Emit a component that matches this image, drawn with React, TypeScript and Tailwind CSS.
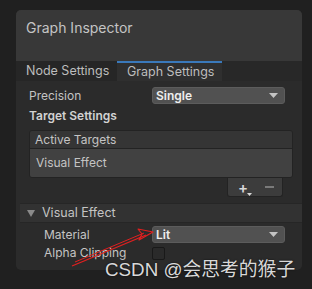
import React from 'react';

const font = { fontFamily: 'Inter, "Noto Sans", sans-serif' };

function Dropdown({ value }: { value: string }) {
  return (
    <div className="w-[133px] h-[17px] rounded-[3px] bg-[#515151] border border-[#5c5c5c] flex items-center justify-between pl-[3px] pr-[6px]">
      <span className="text-[12px] font-semibold text-[#eeeeee] leading-none">{value}</span>
      <svg width="9" height="5" viewBox="0 0 9 5">
        <path d="M0 0 H9 L4.5 5 Z" fill="#c4c4c4" />
      </svg>
    </div>
  );
}

export default function App() {
  return (
    <div className="relative w-[312px] h-[289px] bg-[#202020] overflow-hidden pt-[10px] pl-[16px]" style={font}>
      <div className="w-[286px] h-[260px] rounded-[5px] bg-[#2b2b2b] overflow-hidden flex flex-col">
        {/* header */}
        <div className="h-[51px] bg-[#383838] px-[10px] pt-[8px] text-[14px] text-[#c4c4c4] leading-[20px]">
          Graph Inspector
        </div>
        {/* tabs */}
        <div className="h-[20px] bg-[#282828] flex text-[12.5px] text-[#bdbdbd] leading-none">
          <div className="w-[101px] pl-[10px] pt-[1px] flex items-center bg-[#262626]">Node Settings</div>
          <div className="w-[105px] border-t-2 border-[#3a79bb] bg-[#2f2f2f] pl-[10px] flex items-center">Graph Settings</div>
        </div>
        {/* content */}
        <div className="flex flex-col text-[12px] text-[#c4c4c4]">
          <div className="mt-[6px] h-[17px] flex items-center">
            <span className="w-[136px] pl-[13px]">Precision</span>
            <Dropdown value="Single" />
          </div>
          <div className="mt-[3px] pl-[13px] h-[18px] flex items-center font-semibold text-[#d2d2d2]">Target Settings</div>
          <div className="mt-[5px] ml-[13px] w-[264px] rounded-[3px] overflow-hidden border border-[#232323]">
            <div className="h-[18px] bg-[#353535] border-b border-[#232323] pl-[5px] flex items-center">Active Targets</div>
            <div className="h-[28px] bg-[#414141] pl-[6px] flex items-center">Visual Effect</div>
          </div>
          <div className="ml-[211px] w-[56px] h-[19px] bg-[#3c3c3c] rounded-b-[3px] border border-t-0 border-[#232323] flex items-center gap-[13px] pl-[10px]">
            <span className="relative text-[15px] text-[#d8d8d8] leading-none font-semibold">
              +
              <svg className="absolute right-[-4px] bottom-[-1px]" width="5" height="3" viewBox="0 0 5 3">
                <path d="M0 0 H5 L2.5 3 Z" fill="#d8d8d8" />
              </svg>
            </span>
            <span className="w-[9px] h-[2px] bg-[#7a7a7a] ml-[4px]" />
          </div>
          <div className="mt-[6px] ml-[4px] h-[20px] bg-[#323232] border-y border-[#262626] flex items-center pl-[7px] gap-[7px] text-[12.5px]">
            <svg width="8" height="7" viewBox="0 0 8 7">
              <path d="M0 0 H8 L4 7 Z" fill="#8a8a8a" />
            </svg>
            Visual Effect
          </div>
          <div className="mt-[3px] h-[17px] flex items-center">
            <span className="w-[136px] pl-[28px]">Material</span>
            <Dropdown value="Lit" />
          </div>
          <div className="mt-[3px] h-[14px] flex items-center">
            <span className="w-[136px] pl-[28px]">Alpha Clipping</span>
            <span className="w-[13px] h-[13px] rounded-[2px] bg-[#2a2a2a] border border-[#191919]" />
          </div>
        </div>
      </div>
      {/* annotation arrow */}
      <svg className="absolute left-0 top-0" width="312" height="289" viewBox="0 0 312 289">
        <path d="M72 266 L146 235" stroke="#e02020" strokeWidth="1.3" fill="none" />
        <path d="M75 262 L144 233" stroke="#e02020" strokeWidth="1" fill="none" />
        <path d="M153 232 L138 229 L142 234 L139 240 Z" stroke="#e02020" strokeWidth="1.2" fill="none" strokeLinejoin="round" />
      </svg>
      <div className="absolute left-[105px] top-[258px] text-[18.8px] leading-[24px] text-[#d9d9d9] whitespace-nowrap" style={{ fontFamily: '"Liberation Sans", "Noto Sans CJK SC", sans-serif', textShadow: '0 0 2px rgba(0,0,0,0.8)' }}>
        CSDN @会思考的猴子
      </div>
    </div>
  );
}
